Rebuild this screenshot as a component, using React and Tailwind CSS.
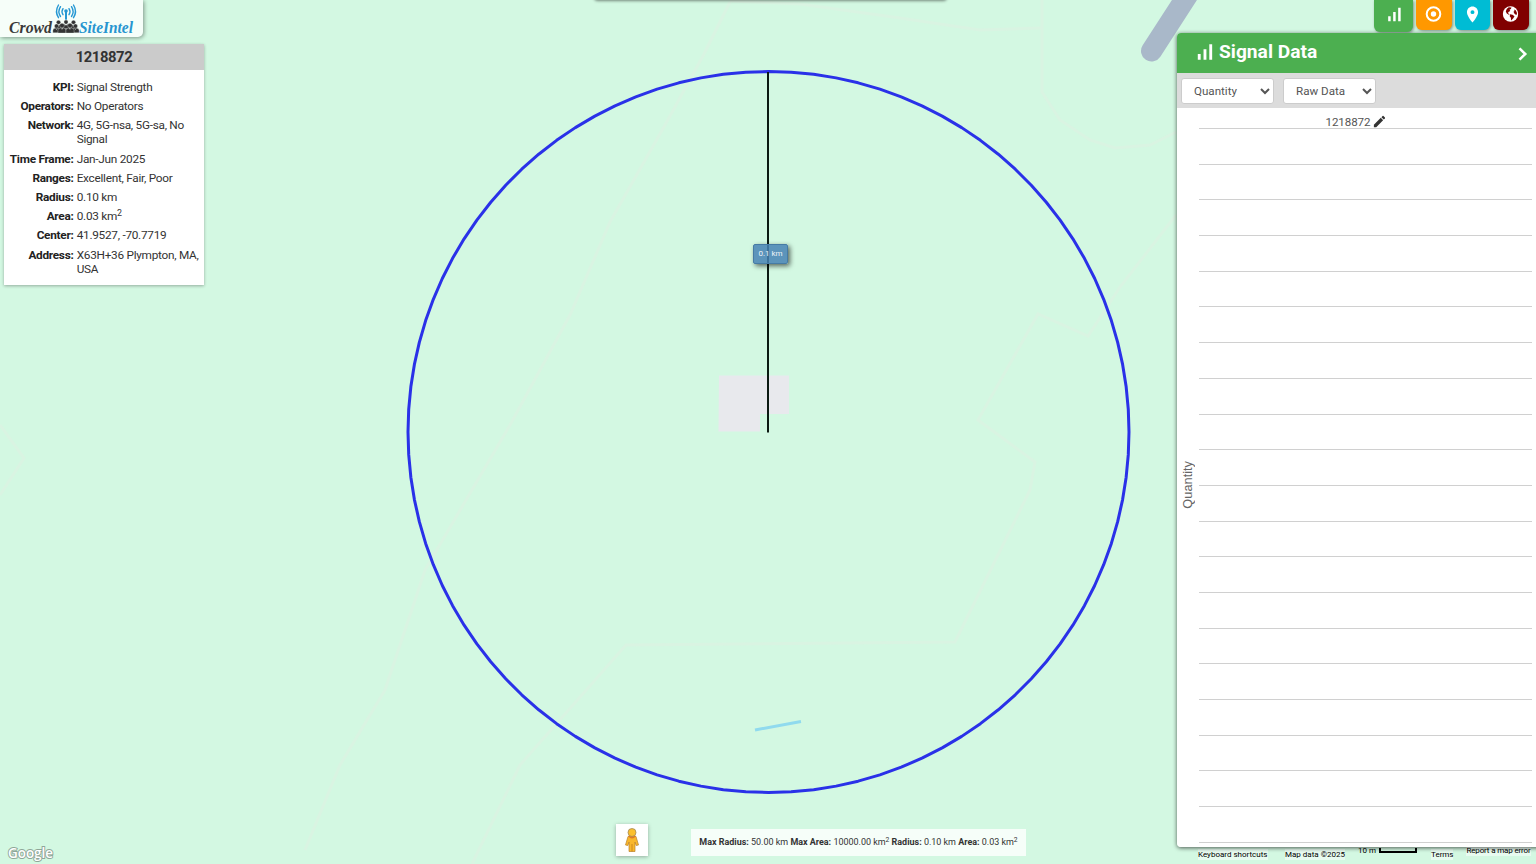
import React from "react";
import { MdSignalCellularAlt, MdPlace, MdModeEdit } from "react-icons/md";

const info = [
  ["KPI", "Signal Strength"],
  ["Operators", "No Operators"],
  ["Network", "4G, 5G-nsa, 5G-sa, No Signal"],
  ["Time Frame", "Jan-Jun 2025"],
  ["Ranges", "Excellent, Fair, Poor"],
  ["Radius", "0.10 km"],
  ["Area", <>0.03 km<Sup /></>],
  ["Center", "41.9527, -70.7719"],
  ["Address", "X63H+36 Plympton, MA, USA"],
];

function Sup() {
  return <sup className="relative -top-[0.45em] align-baseline text-[75%] leading-none">2</sup>;
}

// Regular polygon with straight segments, as the map renders its radius ring.
const ring = Array.from({ length: 100 }, (_, i) => {
  const a = (i * 3.6 * Math.PI) / 180;
  return `${(768.5 + 360.5 * Math.sin(a)).toFixed(2)},${(432 - 360.5 * Math.cos(a)).toFixed(2)}`;
}).join(" ");

function MapCanvas() {
  return (
    <svg className="absolute inset-0" width="1536" height="864" viewBox="0 0 1536 864">
      <rect width="1536" height="864" fill="#d3f8e2" />
      <g fill="none" stroke="#d9f4e2" strokeWidth="3">
        <path d="M730 2L704 54L665 125L610 222L570 315L510 425L425 570L385 690L340 765L305 850" />
        <path d="M730 1L800 4L900 18L980 30L1042 28" />
        <path d="M1042 0V92L1060 120L1090 140L1115 148L1150 145L1176 132" />
        <path d="M1176 215L1120 287L1088 336L1038 314L978 420L1035 462L1030 490L955 642L626 645L520 765L472 864" />
        <path d="M0 425L24 458L0 495" />
      </g>
      <path d="M1151.500 51L1193.500 -14" stroke="#a9b8c9" strokeWidth="21" strokeLinecap="round" />
      <path d="M719 375.500H789V414H760V431.500H718.500Z" fill="#e8e9ed" />
      <path d="M755 730L801 721.500" stroke="#90daee" strokeWidth="3" />
      <polygon points={ring} fill="none" stroke="#2a31e8" strokeWidth="3" strokeLinejoin="round" />
      <path d="M768 72V432.500" stroke="#0b1a12" strokeWidth="2" />
    </svg>
  );
}

function Person({ x, y, s = 1 }) {
  return (
    <g transform={`translate(${x} ${y}) scale(${s})`}>
      <circle cx="0" cy="0" r="2.500" />
      <path d="M-4.300 8V5.200Q-4.300 2.600-1.500 2.600L0 4L1.500 2.600Q4.300 2.600 4.300 5.200V8Z" />
    </g>
  );
}

function Logo() {
  return (
    <div className="absolute left-0 top-0 h-[37px] w-[143px] rounded-br-[5px] bg-[#f6fef9] shadow-[1px_1px_4px_rgba(0,0,0,0.4)]">
      <svg width="143" height="37" viewBox="0 0 143 37">
        <g fill="none" stroke="#2497d3" strokeWidth="1.400" strokeLinecap="round">
          <path d="M63 8.700Q61 11.700 63 14.700M69 8.700Q71 11.700 69 14.700" />
          <path d="M60.500 6.700Q57.300 11.700 60.500 16.500M71.500 6.700Q74.700 11.700 71.500 16.500" />
          <path d="M58.500 5Q54.500 11.500 58.500 17.700M73.500 5Q77.500 11.500 73.500 17.700" />
          <path d="M66 11V19" strokeWidth="2" />
        </g>
        <circle cx="66" cy="11" r="1.800" fill="#2497d3" />
        <g fill="#333" stroke="#f6fef9" strokeWidth="0.350">
          <Person x="58.500" y="22.300" s={0.85} />
          <Person x="66" y="22" s={0.85} />
          <Person x="73.500" y="22.300" s={0.85} />
          <Person x="56.500" y="26" s={0.85} />
          <Person x="75.500" y="26" s={0.85} />
          <Person x="62" y="25.500" s={0.95} />
          <Person x="70" y="25.500" s={0.95} />
        </g>
        <g fontFamily="'Liberation Serif', serif" fontStyle="italic" fontWeight="700" fontSize="16">
          <text x="9" y="33" fill="#3a3a3a" textLength="43" lengthAdjust="spacingAndGlyphs">Crowd</text>
          <text x="79" y="33" fill="#2795d0" textLength="54" lengthAdjust="spacingAndGlyphs">SiteIntel</text>
        </g>
      </svg>
    </div>
  );
}

function InfoCard() {
  return (
    <section className="absolute left-1 top-11 h-[241px] w-[200px] bg-white text-[11.800px] leading-[14.400px] tracking-[-0.270px] text-[#333] shadow-[0_1px_3px_rgba(0,0,0,0.3)]">
      <h2 className="flex h-[25.500px] items-center justify-center bg-[#cbcbcb] text-[14.800px] font-bold tracking-[-0.400px]">1218872</h2>
      <dl className="flex flex-col gap-[4.800px] pt-[10px]">
        {info.map(([label, value]) => (
          <div key={label} className="flex">
            <dt className="w-[69.500px] shrink-0 whitespace-nowrap text-right font-bold text-[#222]">{label}:</dt>
            <dd className="ml-[3.200px] w-[125px]">{value}</dd>
          </div>
        ))}
      </dl>
    </section>
  );
}

function SignalPanel() {
  return (
    <aside className="absolute left-[1177px] top-[33px] flex h-[814px] w-[359px] flex-col overflow-hidden rounded-l-[4px] bg-white">
      <header className="flex h-[39.500px] shrink-0 items-center bg-[#4caf50] pl-[16px] pr-[7px] text-white">
        <MdSignalCellularAlt className="size-[23px] -translate-y-[0.500px]" />
        <h1 className="-mt-[2px] ml-[3px] flex-1 text-[19.200px] font-bold leading-6">Signal Data</h1>
        <svg className="mt-[3px]" width="12" height="16" viewBox="0 0 12 16" fill="none" stroke="currentColor" strokeWidth="2.500">
          <path d="M2.500 2.300L8.300 8L2.500 13.700" />
        </svg>
      </header>
      <div className="flex h-[35.500px] shrink-0 gap-[9px] bg-[#dcdcdc] pl-1 pt-[5px]">
        <select className="h-[26px] w-[93px] rounded-[3px] border border-[#ccc] bg-white pl-[8px] text-[11.600px] text-[#555]">
          <option>Quantity</option>
        </select>
        <select className="h-[26px] w-[93px] rounded-[3px] border border-[#ccc] bg-white pl-[8px] text-[11.600px] text-[#555]">
          <option>Raw Data</option>
        </select>
      </div>
      <div className="flex flex-1">
        <div className="flex w-[22px] items-center justify-center pt-[15px]">
          <span className="rotate-180 text-[12.800px] leading-4 text-[#666] [writing-mode:vertical-rl] [font-family:'Liberation_Sans',sans-serif]">Quantity</span>
        </div>
        <div className="w-[333px]">
          <div className="flex h-[21px] items-end justify-center border-b border-[#d0d0d0] pr-[18px] text-[11.600px] leading-[11px] tracking-[-0.100px] text-[#555]">
            <span>1218872</span>
            <MdModeEdit className="-mb-px ml-[2px] size-[15px] text-[#333]" />
          </div>
          {Array.from({ length: 20 }, (_, i) => (
            <div key={i} className="h-[35.700px] border-b border-[#d0d0d0]" />
          ))}
        </div>
      </div>
    </aside>
  );
}

function TargetIcon() {
  return (
    <svg className="-translate-x-[0.500px] -translate-y-px" width="18" height="18" viewBox="0 0 18 18">
      <circle cx="9" cy="9" r="6.800" fill="none" stroke="currentColor" strokeWidth="2" />
      <circle cx="9" cy="9" r="2.700" fill="currentColor" />
    </svg>
  );
}

function GlobeIcon() {
  return (
    <svg className="-translate-x-[0.500px] -translate-y-px" width="16" height="16" viewBox="0 0 16 16">
      <circle cx="8" cy="8" r="7.700" fill="currentColor" />
      <path d="M6.200 1.300L9 1.600L8.400 3L7 3.800L7.800 5L6.300 5.700L5.400 7L7.200 8.400L6.400 8.800L4.300 7.600L3.300 5.500L4.200 3Z" fill="#800000" />
      <path d="M7.600 8.300L10 8.700L12 10.200L10.800 12.200L9.400 13.800L8.500 14.400L8.400 11.800L7.200 10.200Z" fill="#800000" />
      <path d="M11.500 3.600L13.200 4.200L14.300 6.400L14.500 8.500L13.300 8.700L11.800 7.400L11 5.700L12 5Z" fill="#800000" />
    </svg>
  );
}

function Tabs() {
  const base = "flex items-center justify-center rounded-b-[6px] text-white shadow-[1px_1px_3px_rgba(0,0,0,0.4)]";
  return (
    <nav className="absolute left-[1374px] top-0 flex gap-[3px]">
      <div className={`${base} h-8 w-[39px] bg-[#4caf50]`}><MdSignalCellularAlt className="size-[20px] -translate-y-[1.500px]" /></div>
      <div className={`${base} h-[30px] w-[35.500px] bg-[#ff9800]`}><TargetIcon /></div>
      <div className={`${base} h-[30px] w-[35.500px] bg-[#00bcd4]`}><MdPlace className="size-[19px] -translate-y-px" /></div>
      <div className={`${base} h-[30px] w-[35.500px] bg-[#800000]`}><GlobeIcon /></div>
    </nav>
  );
}

function Pegman() {
  return (
    <div className="absolute left-[616px] top-[824px] flex size-8 items-center justify-center bg-white shadow-[0_1px_4px_rgba(0,0,0,0.3)]">
      <svg width="16" height="26" viewBox="0 0 16 26">
        <path d="M4 9.500Q8 7 12 9.500L14.500 18L12.200 18.500L11 15V24.500H5V15L3.800 18.500L1.500 18Z" fill="#f9b72b" stroke="#b9812b" strokeWidth="0.700" />
        <path d="M8 17V24.500" stroke="#c47b17" strokeWidth="0.800" />
        <path d="M4 9Q8 14 12 9Z" fill="#e17b24" />
        <circle cx="8" cy="5.500" r="4" fill="#fbc02d" stroke="#a1895b" strokeWidth="0.800" />
      </svg>
    </div>
  );
}

function Attribution() {
  const chip = "h-[11px] bg-[#e8fbf0] leading-[11px]";
  return (
    <footer className="absolute left-[1198px] top-[849px] flex h-[15px] w-[338px] whitespace-nowrap text-[8px] text-black">
      <span className={`${chip} w-[70px]`}>Keyboard shortcuts</span>
      <span className={`${chip} ml-[17px] w-[60px]`}>Map data ©2025</span>
      <span className="-mt-[4px] ml-[13px] h-[11px] leading-[11px]">10 m</span>
      <span className="-mt-px ml-[3px] h-[5px] w-[38px] border-2 border-t-0 border-black" />
      <span className={`${chip} ml-[14px]`}>Terms</span>
      <span className="-mt-[4px] ml-[13px] h-[11px] bg-[#e8fbf0] leading-[11px] tracking-[-0.150px]">Report a map error</span>
    </footer>
  );
}

export default function App() {
  return (
    <main className="relative h-[864px] w-[1536px] overflow-hidden text-[#333] [font-family:Roboto,sans-serif]">
      <MapCanvas />
      <div className="absolute left-[594px] -top-[9px] h-[9px] w-[353px] rounded-b-[4px] bg-white shadow-[0_1px_3px_rgba(0,0,0,0.45)]" />
      <Logo />
      <InfoCard />
      <div className="absolute left-[753px] top-[244px] flex h-[20px] w-[35px] items-center justify-center rounded-[2px] border border-[#467ba5] bg-[#4682b4]/85 text-[8px] text-white shadow-[2px_2px_5px_rgba(0,0,0,0.6)]">
        <span className="opacity-90">0.1 km</span>
      </div>
      <Attribution />
      <div className="absolute left-[1177px] top-[33px] h-[814px] w-[370px] rounded-l-[4px] shadow-[0_1px_4px_rgba(0,0,0,0.65)]" />
      <Tabs />
      <SignalPanel />
      <Pegman />
      <div className="absolute left-[691px] top-[829px] flex h-[27px] w-[335px] items-center justify-center whitespace-nowrap bg-[#f6fef9] pt-px text-[8.960px]">
        <p><b>Max Radius:</b> 50.00 km <b>Max Area:</b> 10000.00 km<Sup /> <b>Radius:</b> 0.10 km <b>Area:</b> 0.03 km<Sup /></p>
      </div>
      <svg className="absolute left-[6px] top-[843px]" width="50" height="20" viewBox="0 0 50 20">
        <text x="2" y="14.500" fontFamily="'Open Sans', sans-serif" fontSize="14.500" fontWeight="600" fill="#fff" stroke="#8fa698" strokeWidth="2" paintOrder="stroke" textLength="45" lengthAdjust="spacingAndGlyphs">Google</text>
      </svg>
    </main>
  );
}
